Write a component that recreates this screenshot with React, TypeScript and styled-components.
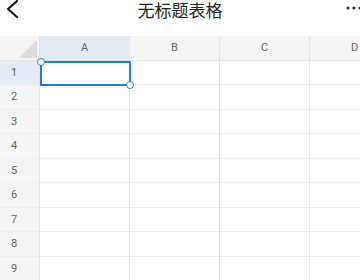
import React from "react";
import styled, { createGlobalStyle } from "styled-components";

const Global = createGlobalStyle`
  html, body { margin: 0; padding: 0; background: #fff; }
  body { font-family: "Noto Sans", "Noto Sans CJK SC", sans-serif; overflow: hidden; }
`;

const Page = styled.div`
  width: 360px;
  height: 280px;
  overflow: hidden;
  display: flex;
  flex-direction: column;
  background: #fff;
`;

const TopBar = styled.div`
  height: 36px;
  flex: none;
  position: relative;
  display: flex;
  justify-content: center;
  align-items: flex-start;
`;

const Title = styled.div`
  font-family: "Noto Sans CJK SC", sans-serif;
  font-size: 17px;
  line-height: 20px;
  margin-top: 0px;
  color: #222;
`;

const BackBtn = styled.svg`
  position: absolute;
  left: 4px;
  top: -2px;
`;

const More = styled.svg`
  position: absolute;
  right: 0;
  top: 4px;
`;

const Grid = styled.div`
  display: grid;
  grid-template-columns: 40px 90px 90px 90px 90px;
  grid-template-rows: 24.5px repeat(9, 24.5px);
  position: relative;
`;

const Corner = styled.div`
  background: #f4f4f4;
  border-right: 1px solid #e3e3e3;
  border-bottom: 1px solid #e3e3e3;
  position: relative;
  &::after {
    content: "";
    position: absolute;
    right: 2px;
    bottom: 2px;
    width: 0;
    height: 0;
    border-left: 18px solid transparent;
    border-bottom: 18px solid #dcdcdc;
  }
`;

const ColHead = styled.div<{ $active?: boolean }>`
  background: ${(p) => (p.$active ? "#e4ebf7" : "#f4f4f4")};
  border-right: 1px solid #e3e3e3;
  border-bottom: 1px solid #e3e3e3;
  display: flex;
  align-items: center;
  justify-content: center;
  font-family: "Roboto", sans-serif;
  font-size: 11px;
  color: #666;
`;

const RowHead = styled.div<{ $active?: boolean }>`
  background: ${(p) => (p.$active ? "#e4ebf7" : "#f4f4f4")};
  border-right: 1px solid #e3e3e3;
  border-bottom: 1px solid #ececec;
  display: flex;
  align-items: center;
  padding-left: 11px;
  font-family: "Roboto", sans-serif;
  font-size: 11px;
  color: #666;
`;

const Cell = styled.div`
  border-right: 1px solid #e6e6e6;
  border-bottom: 1px solid #ececec;
`;

const Selection = styled.div`
  position: absolute;
  left: 40px;
  top: 24.5px;
  width: 91px;
  height: 25px;
  box-sizing: border-box;
  border: 2px solid #1e7fd0;
`;

const Handle = styled.div<{ $pos: "tl" | "br" }>`
  position: absolute;
  width: 6px;
  height: 6px;
  border-radius: 50%;
  background: #fff;
  border: 1.5px solid #1e7fd0;
  ${(p) => (p.$pos === "tl" ? "left: -5px; top: -5px;" : "right: -5px; bottom: -5px;")}
`;

const cols = ["A", "B", "C", "D"];
const rows = [1, 2, 3, 4, 5, 6, 7, 8, 9];

export default function App() {
  return (
    <Page>
      <Global />
      <TopBar>
        <BackBtn width="16" height="22" viewBox="0 0 16 22">
          <path d="M13 3 L4 11 L13 19" fill="none" stroke="#111" strokeWidth="2" strokeLinecap="square" />
        </BackBtn>
        <Title>无标题表格</Title>
        <More width="16" height="8" viewBox="0 0 16 8">
          <circle cx="4" cy="4" r="1.6" fill="#333" />
          <circle cx="10" cy="4" r="1.6" fill="#333" />
          <circle cx="16" cy="4" r="1.6" fill="#333" />
        </More>
      </TopBar>
      <Grid>
        <Corner />
        {cols.map((c) => (
          <ColHead key={c} $active={c === "A"}>{c}</ColHead>
        ))}
        {rows.map((r) => (
          <React.Fragment key={r}>
            <RowHead $active={r === 1}>{r}</RowHead>
            {cols.map((c) => (
              <Cell key={c} />
            ))}
          </React.Fragment>
        ))}
        <Selection>
          <Handle $pos="tl" />
          <Handle $pos="br" />
        </Selection>
      </Grid>
    </Page>
  );
}
